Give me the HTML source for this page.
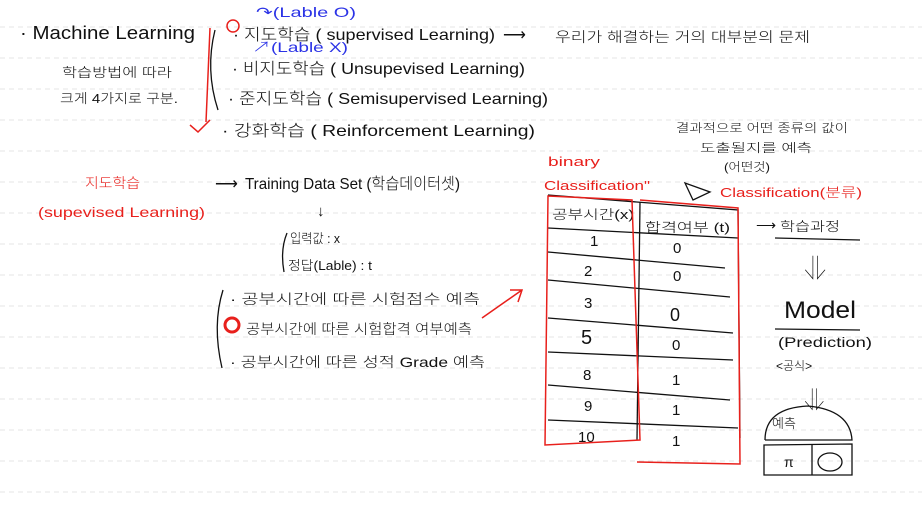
<!DOCTYPE html>
<html><head><meta charset="utf-8"><style>
html,body{margin:0;padding:0;background:#fff;width:922px;height:526px;overflow:hidden}
svg text{font-family:"Liberation Sans","Noto Sans CJK KR","NanumGothic",sans-serif;font-weight:300}
</style></head><body>
<svg width="922" height="526" viewBox="0 0 922 526" xmlns="http://www.w3.org/2000/svg">
<g stroke="#e4e4e4" stroke-width="1" stroke-dasharray="5,4">
<line x1="0" y1="27" x2="922" y2="27"/><line x1="0" y1="58" x2="922" y2="58"/><line x1="0" y1="89" x2="922" y2="89"/><line x1="0" y1="120" x2="922" y2="120"/><line x1="0" y1="151" x2="922" y2="151"/><line x1="0" y1="182" x2="922" y2="182"/><line x1="0" y1="213" x2="922" y2="213"/><line x1="0" y1="244" x2="922" y2="244"/><line x1="0" y1="275" x2="922" y2="275"/><line x1="0" y1="306" x2="922" y2="306"/><line x1="0" y1="337" x2="922" y2="337"/><line x1="0" y1="368" x2="922" y2="368"/><line x1="0" y1="399" x2="922" y2="399"/><line x1="0" y1="430" x2="922" y2="430"/><line x1="0" y1="461" x2="922" y2="461"/><line x1="0" y1="492" x2="922" y2="492"/>
</g>
<g fill="#111" font-size="15" lengthAdjust="spacingAndGlyphs">
<text x="20" y="39" font-size="18" textLength="175" lengthAdjust="spacingAndGlyphs">·  Machine Learning</text>
<text x="62" y="77" font-size="13" textLength="110" lengthAdjust="spacingAndGlyphs">학습방법에 따라</text>
<text x="60" y="103" font-size="13" textLength="118" lengthAdjust="spacingAndGlyphs">크게 4가지로 구분.</text>
<text x="233" y="40" font-size="16" textLength="262" lengthAdjust="spacingAndGlyphs">· 지도학습 ( supervised Learning)</text>
<text x="503" y="40" font-size="16">⟶</text>
<text x="555" y="42" font-size="14" textLength="255" lengthAdjust="spacingAndGlyphs">우리가 해결하는 거의 대부분의 문제</text>
<text x="232" y="74" font-size="16" textLength="293" lengthAdjust="spacingAndGlyphs">· 비지도학습 ( Unsupevised Learning)</text>
<text x="228" y="104" font-size="16" textLength="320" lengthAdjust="spacingAndGlyphs">· 준지도학습 ( Semisupervised Learning)</text>
<text x="222" y="136" font-size="16" textLength="313" lengthAdjust="spacingAndGlyphs">· 강화학습 ( Reinforcement Learning)</text>
<text x="215" y="189" font-size="16">⟶</text>
<text x="245" y="189" font-size="16" textLength="215" lengthAdjust="spacingAndGlyphs">Training Data Set (학습데이터셋)</text>
<text x="317" y="216">↓</text>
<text x="290" y="243" font-size="13" textLength="50" lengthAdjust="spacingAndGlyphs">입력값 : x</text>
<text x="288" y="270" font-size="13" textLength="84" lengthAdjust="spacingAndGlyphs">정답(Lable) : t</text>
<text x="230" y="304" font-size="14" textLength="250" lengthAdjust="spacingAndGlyphs">· 공부시간에 따른 시험점수 예측</text>
<text x="246" y="334" font-size="14" textLength="226" lengthAdjust="spacingAndGlyphs">공부시간에 따른 시험합격 여부예측</text>
<text x="230" y="367" font-size="14" textLength="255" lengthAdjust="spacingAndGlyphs">· 공부시간에 따른 성적 Grade 예측</text>
<text x="676" y="132" font-size="12" textLength="172" lengthAdjust="spacingAndGlyphs">결과적으로 어떤 종류의 값이</text>
<text x="700" y="152" font-size="12" textLength="112" lengthAdjust="spacingAndGlyphs">도출될지를 예측</text>
<text x="724" y="171" font-size="12" textLength="46" lengthAdjust="spacingAndGlyphs">(어떤것)</text>
<text x="756" y="230" font-size="14">⟶</text>
<text x="780" y="231" font-size="13" textLength="60" lengthAdjust="spacingAndGlyphs">학습과정</text>
<text x="784" y="318" font-size="24" textLength="72" lengthAdjust="spacingAndGlyphs">Model</text>
<text x="778" y="347" font-size="14" textLength="94" lengthAdjust="spacingAndGlyphs">(Prediction)</text>
<text x="776" y="370" font-size="12">&lt;공식&gt;</text>
<text x="804" y="276" font-size="24">⇓</text>
<text x="804" y="407" font-size="22">⇓</text>
<text x="772" y="428" font-size="13">예측</text>
<text x="784" y="467" font-size="14">π</text>
<text x="552" y="219" font-size="13" textLength="82" lengthAdjust="spacingAndGlyphs">공부시간(x)</text>
<text x="645" y="232" font-size="13" textLength="85" lengthAdjust="spacingAndGlyphs">합격여부 (t)</text>
<text x="590" y="246">1</text><text x="584" y="276">2</text><text x="584" y="308">3</text><text x="581" y="344" font-size="20">5</text><text x="583" y="380">8</text><text x="584" y="411">9</text><text x="578" y="442">10</text>
<text x="673" y="253">0</text><text x="673" y="281">0</text><text x="670" y="321" font-size="18">0</text><text x="672" y="350">0</text><text x="672" y="385">1</text><text x="672" y="415">1</text><text x="672" y="446">1</text>
</g>
<g fill="#2b33e6" font-size="14">
<text x="256" y="17" textLength="100" lengthAdjust="spacingAndGlyphs">↷(Lable O)</text>
<text x="252" y="52" textLength="96" lengthAdjust="spacingAndGlyphs">↗(Lable X)</text>
</g>
<g fill="#e8201c" font-size="14">
<text x="85" y="188" textLength="55" lengthAdjust="spacingAndGlyphs">지도학습</text>
<text x="38" y="217" textLength="167" lengthAdjust="spacingAndGlyphs">(supevised Learning)</text>
<text x="548" y="166" font-size="13" textLength="52" lengthAdjust="spacingAndGlyphs">binary</text>
<text x="544" y="190" font-size="13" textLength="106" lengthAdjust="spacingAndGlyphs">Classification"</text>
<text x="720" y="197" font-size="13" textLength="142" lengthAdjust="spacingAndGlyphs">Classification(분류)</text>
</g>
<g fill="none" stroke="#111" stroke-width="1.3">
<path d="M215 30 Q205 70 218 110"/>
<path d="M287 233 Q280 250 284 272"/>
<path d="M223 290 Q212 325 222 368"/>
<path d="M548 195 L738 210 L740 438"/>
<path d="M548 228 L738 238"/><path d="M548 252 L725 268"/><path d="M548 280 L730 297"/><path d="M548 318 L733 333"/><path d="M548 352 L733 360"/><path d="M548 385 L730 400"/><path d="M548 420 L738 428"/>
<path d="M640 202 L637 440"/>
<path d="M685 183 L693 200 L710 192 Z"/>
<path d="M775 238 L860 240"/><path d="M775 329 L860 330"/>
<path d="M765 440 L852 440 Q850 410 808 406 Q765 408 765 440"/>
<path d="M764 445 L852 444 L852 475 L764 475 Z"/><path d="M812 444 L812 475"/>
<ellipse cx="830" cy="462" rx="12" ry="9"/>
</g>
<g fill="none" stroke="#e8201c" stroke-width="1.5">
<path d="M210 28 L206 122"/>
<path d="M548 196 L632 200 L640 440 L545 445 Z"/>
<path d="M640 200 L738 208 L740 464 L637 462"/>
<path d="M482 318 L522 290 M510 290 L522 290 L518 302"/>
<path d="M190 125 L198 132 L210 120"/>
<circle cx="233" cy="26" r="6"/>
<circle cx="232" cy="325" r="7" stroke-width="3"/>
</g>
</svg>
</body></html>
